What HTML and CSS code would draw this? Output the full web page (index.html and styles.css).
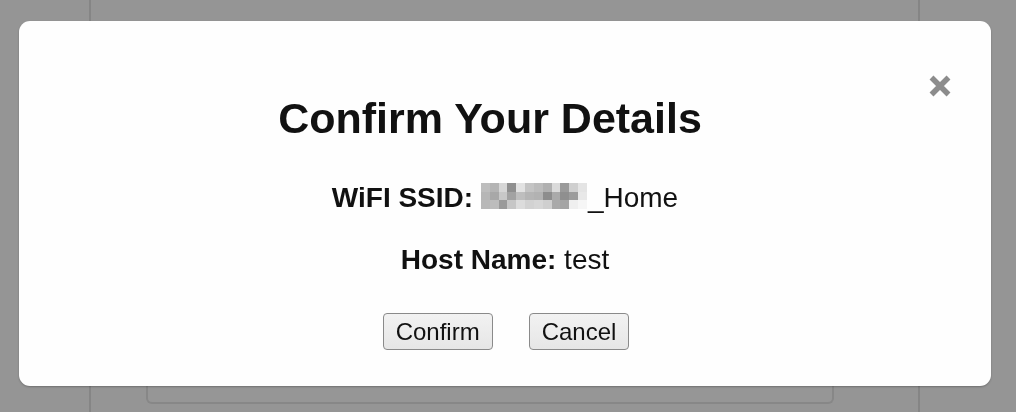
FILE: index.html
```html
<!DOCTYPE html>
<html>
<head>
<meta charset="utf-8">
<link rel="stylesheet" href="styles.css">
</head>
<body>
<div class="page">
  <div class="panel"></div>
</div>
<div class="modal">
  <button class="close" aria-label="Close">
    <svg width="24" height="24" viewBox="0 0 24 24"><path d="M3.5 3.5 L20.5 20.5 M20.5 3.5 L3.5 20.5" stroke="#8c8c8c" stroke-width="5.5" stroke-linecap="butt"/></svg>
  </button>
  <h1 class="title">Confirm Your Details</h1>
  <p class="row"><b>WiFI SSID:</b> <span class="blur"><i style="background:#bdbdbd"></i><i style="background:#b4b4b4"></i><i style="background:#d6d6d6"></i><i style="background:#8f8f8f"></i><i style="background:#e2e2e2"></i><i style="background:#c4c4c4"></i><i style="background:#bcbcbc"></i><i style="background:#b0b0b0"></i><i style="background:#dadada"></i><i style="background:#9a9a9a"></i><i style="background:#cfcfcf"></i><i style="background:#e4e4e4"></i><i style="background:#b6b6b6"></i><i style="background:#a8a8a8"></i><i style="background:#c8c8c8"></i><i style="background:#a2a2a2"></i><i style="background:#bebebe"></i><i style="background:#b5b5b5"></i><i style="background:#b2b2b2"></i><i style="background:#8d8d8d"></i><i style="background:#aaaaaa"></i><i style="background:#8f8f8f"></i><i style="background:#9c9c9c"></i><i style="background:#e8e8e8"></i><i style="background:#b8b8b8"></i><i style="background:#bcbcbc"></i><i style="background:#9a9a9a"></i><i style="background:#c6c6c6"></i><i style="background:#dcdcdc"></i><i style="background:#d2d2d2"></i><i style="background:#d6d6d6"></i><i style="background:#cfcfcf"></i><i style="background:#a9a9a9"></i><i style="background:#a4a4a4"></i><i style="background:#efefef"></i><i style="background:#f6f6f6"></i></span>_Home</p>
  <p class="row row2"><b>Host Name:</b> test</p>
  <div class="actions">
    <button class="btn">Confirm</button>
    <button class="btn">Cancel</button>
  </div>
</div>
</body>
</html>
```
FILE: styles.css
```css
html, body {
  margin: 0;
  padding: 0;
  height: 100%;
  background: #959595;
  font-family: "Liberation Sans", Arial, sans-serif;
  overflow: hidden;
}
.page {
  margin: 0 0 0 89px;
  width: 831px;
  height: 412px;
  border-left: 2px solid #858585;
  border-right: 2px solid #858585;
  box-sizing: border-box;
  display: flex;
  flex-direction: column;
  justify-content: flex-end;
  padding: 0 84px 8px 55px;
}
.panel {
  height: 60px;
  border: 2px solid #878787;
  border-top: none;
  border-radius: 0 0 6px 6px;
  background: #969696;
}
.modal {
  position: fixed;
  top: 21px;
  left: 19px;
  width: 972px;
  height: 365px;
  background: #fefefe;
  border-radius: 11px;
  box-shadow: 0 1px 2px rgba(0,0,0,0.25);
  box-sizing: border-box;
  padding-top: 72px;
  text-align: center;
  color: #111;
}
.close {
  position: absolute;
  top: 53px;
  left: 909px;
  width: 24px;
  height: 24px;
  padding: 0;
  border: none;
  background: none;
}
.close svg { display: block; }
.title {
  margin: 0 30px 0 0;
  font-size: 43px;
  font-weight: bold;
  line-height: 50px;
}
.row {
  margin: 39px 0 0;
  font-size: 28px;
  line-height: 32px;
}
.row2 { margin-top: 30px; }
.blur {
  display: inline-grid;
  grid-template-columns: repeat(12, 1fr);
  grid-template-rows: repeat(3, 1fr);
  width: 106px;
  height: 26px;
  vertical-align: top;
  margin: 1px 1px 0 0;
}
.blur i { display: block; }
.actions {
  margin-top: 37px;
  display: flex;
  justify-content: center;
  gap: 36px;
  padding-left: 2px;
}
.btn {
  font-family: "Liberation Sans", Arial, sans-serif;
  font-size: 24px;
  color: #111;
  background: linear-gradient(#f2f2f2, #e6e6e6);
  border: 1px solid #8a8a8a;
  border-radius: 4px;
  height: 37px;
  padding: 0 12px;
}
```
